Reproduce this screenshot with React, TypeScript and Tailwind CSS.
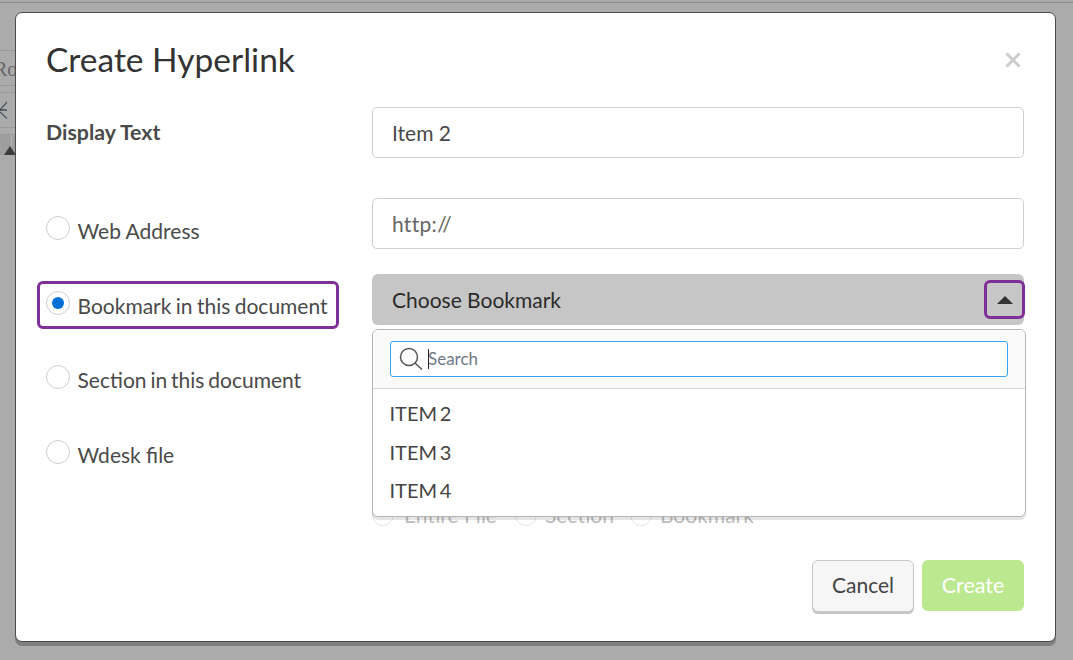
import React from 'react';

const font = { fontFamily: 'Lato, "Liberation Sans", sans-serif' };

const Radio = ({ checked = false, small = false }: { checked?: boolean; small?: boolean }) => (
  <span className={`flex shrink-0 items-center justify-center rounded-full border bg-white ${small ? 'h-[22px] w-[22px] border-[#e4e4e4]' : 'h-[24px] w-[24px] border-[#cfcfcf]'}`}>
    {checked && <span className="h-[12px] w-[12px] rounded-full bg-[#0070d8]" />}
  </span>
);

const Option = ({ label, className = '', checked = false }: { label: string; className?: string; checked?: boolean }) => (
  <div className={`flex items-center gap-[8px] text-[21px] leading-[28px] text-[#4a4a4a] ${className}`}>
    <Radio checked={checked} />
    <span className="relative top-[3px] ml-[-0.500px]">{label}</span>
  </div>
);

export default function App() {
  return (
    <div className="relative h-[660px] w-[1073px] overflow-hidden bg-[#ababab]" style={font}>
      {/* page behind the overlay */}
      <div className="absolute left-0 top-[2px] h-[1px] w-full bg-[#8e8e8e]" />
      <div className="absolute left-0 top-[50px] h-[36px] w-[15px] border-y border-[#999] font-['Liberation_Serif',serif] text-[20px] leading-[36px] text-[#666]">
        <span className="ml-[-6px]">Ro</span>
      </div>
      <div className="absolute left-0 top-[92px] h-[36px] w-[15px] border-y border-[#999]">
        <svg width="15" height="34" viewBox="0 0 15 34" fill="none" strokeWidth="1.2">
          <path d="M7 9 0 17" stroke="#4a5560" />
          <path d="M0 17h7" stroke="#333" />
          <path d="M0 19l7 6.500" stroke="#4a5560" />
        </svg>
      </div>
      <div className="absolute left-0 top-[134px] h-[21px] w-[15px] border-t border-[#999] bg-[#9e9e9e]" />
      <div className="absolute left-[11px] top-[135px] h-[12px] w-[1px] bg-[#b8b8b8]" />
      <div className="absolute left-[4px] top-[146px] h-0 w-0 border-x-[6px] border-b-[9px] border-x-transparent border-b-[#3c3c3c]" />

      {/* dialog */}
      <div className="relative ml-[15px] mt-[12px] flex h-[630px] w-[1041px] flex-col rounded-[7px] border border-[#4a4a4a] bg-white pl-[30px] pr-[31px] shadow-[0_4px_0_#7f7f7f]">
        <div className="relative flex h-[94px] shrink-0 items-start">
          <h1 className="mt-[24px] text-[33.500px] font-normal leading-[44px] text-[#333333]">Create Hyperlink</h1>
          <svg className="absolute right-[3px] top-[39px]" width="16" height="16" viewBox="0 0 16 16" fill="none" stroke="#cccccc" strokeWidth="3">
            <path d="M1.500 1.500l13 13M14.500 1.500l-13 13" />
          </svg>
        </div>

        <div className="flex flex-1">
          <div className="flex w-[326px] shrink-0 flex-col">
            <div className="mt-[11px] text-[21.300px] font-bold leading-[28px] text-[#4a4a4a]">Display Text</div>
            <Option label="Web Address" className="mt-[68px]" />
            <div className="ml-[-9px] mt-[39px] flex h-[48px] w-[302px] items-center rounded-[6px] border-[3px] border-[#7f2f98] pl-[6px]">
              <Option label="Bookmark in this document" className="relative top-[-2px] [word-spacing:-1px]" checked />
            </div>
            <Option label="Section in this document" className="mt-[34px] [word-spacing:-1.500px]" />
            <Option label="Wdesk file" className="mt-[47px]" />
          </div>

          <div className="flex min-w-0 flex-1 flex-col">
            <div className="flex h-[51px] shrink-0 items-center rounded-[5px] border border-[#cfcfcf] pl-[19px] text-[21px] text-[#4a4a4a]">Item 2</div>
            <div className="mt-[40px] flex h-[51px] shrink-0 items-center rounded-[5px] border border-[#cfcfcf] pl-[19px] text-[21px] tracking-[0.300px] text-[#666666]">http://</div>

            <div className="relative mt-[25px]">
              <div className="flex h-[51px] items-center justify-between rounded-[6px] bg-[#c6c6c6] pl-[20px] text-[21px] text-[#2b2b2b]">
                <span>Choose Bookmark</span>
                <span className="mr-[-1px] flex h-[39px] w-[41px] items-center justify-center rounded-[6px] border-[3px] border-[#7f2f98]">
                  <span className="h-0 w-0 border-x-[8px] border-b-[8px] border-x-transparent border-b-[#333333]" />
                </span>
              </div>

              {/* radios hidden behind the open menu */}
              <div className="mt-[177px] flex h-[26px] items-center gap-[16px] text-[21px] text-[#bdbdbd]">
                <span className="mr-[2px] flex items-center gap-[10px]"><Radio small />Entire File</span>
                <span className="flex items-center gap-[8px]"><Radio small />Section</span>
                <span className="flex items-center gap-[8px]"><Radio small />Bookmark</span>
              </div>

              <div className="absolute left-0 top-[55px] h-[188px] w-[654px] overflow-hidden rounded-[6px] border border-[#b5b5b5] bg-white shadow-[0_3px_0_rgba(0,0,0,0.1)]">
                <div className="flex h-[59px] items-center border-b border-[#d6d6d6] bg-[#fafafa] px-[17px]">
                  <div className="flex h-[36px] w-full items-center rounded-[3px] border border-[#3ba4f0] bg-white pl-[8px]">
                    <svg width="24" height="24" viewBox="0 0 24 24" fill="none" stroke="#555555" strokeWidth="1.500">
                      <circle cx="10" cy="10" r="8.500" />
                      <path d="M16 16l7 6.500" />
                    </svg>
                    <span className="ml-[5px] h-[20px] w-[1px] bg-[#222222]" />
                    <span className="ml-[-1px] text-[17px] text-[#6f7a86]">Search</span>
                  </div>
                </div>
                <div className="flex flex-col pl-[16.500px] pt-[5px] text-[20px] leading-[38.500px] text-[#444444] [word-spacing:-2.500px]">
                  <span>ITEM 2</span>
                  <span>ITEM 3</span>
                  <span>ITEM 4</span>
                </div>
              </div>
            </div>

            <div className="mt-[32px] flex justify-end gap-[8px]">
              <button className="h-[52px] w-[102px] rounded-[6px] border border-[#c8c8c8] bg-[#f6f6f6] pb-[2px] text-[21px] text-[#444444] shadow-[0_2px_0_#c4c4c4]">Cancel</button>
              <button className="h-[51px] w-[102px] rounded-[6px] bg-[#bce98f] text-[21.500px] text-white">Create</button>
            </div>
          </div>
        </div>
      </div>
    </div>
  );
}
